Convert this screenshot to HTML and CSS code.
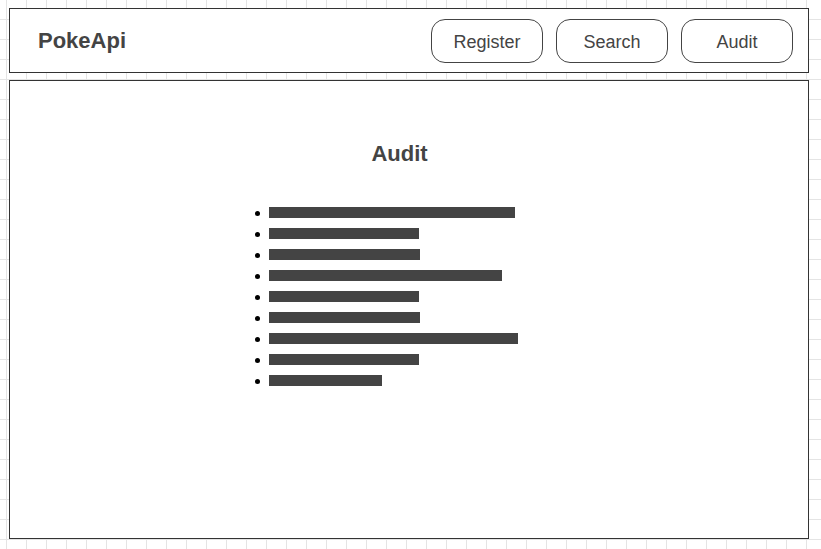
FILE: index.html
```html
<!DOCTYPE html>
<html lang="en">
<head>
<meta charset="utf-8">
<title>PokeApi - Audit</title>
<link rel="stylesheet" href="styles.css">
</head>
<body>
<div class="page">
  <header class="topbar">
    <div class="brand">PokeApi</div>
    <nav class="nav">
      <button class="nav-btn">Register</button>
      <button class="nav-btn">Search</button>
      <button class="nav-btn">Audit</button>
    </nav>
  </header>
  <main class="content">
    <h1 class="title">Audit</h1>
    <ul class="audit-list">
      <li class="audit-item"><span class="bar" style="width:246px"></span></li>
      <li class="audit-item"><span class="bar" style="width:150px"></span></li>
      <li class="audit-item"><span class="bar" style="width:151px"></span></li>
      <li class="audit-item"><span class="bar" style="width:233px"></span></li>
      <li class="audit-item"><span class="bar" style="width:150px"></span></li>
      <li class="audit-item"><span class="bar" style="width:151px"></span></li>
      <li class="audit-item"><span class="bar" style="width:249px"></span></li>
      <li class="audit-item"><span class="bar" style="width:150px"></span></li>
      <li class="audit-item"><span class="bar" style="width:113px"></span></li>
    </ul>
  </main>
</div>
</body>
</html>
```

FILE: styles.css
```css
html, body {
  margin: 0;
  padding: 0;
}

body {
  font-family: "Liberation Sans", Arial, sans-serif;
  color: #444;
  background-color: #fff;
  background-image:
    linear-gradient(to right, #e4e4e4 1px, transparent 1px),
    linear-gradient(to bottom, #e4e4e4 1px, transparent 1px);
  background-size: 20px 20px;
  background-position: 6px 19px;
  min-height: 549px;
}

.page {
  padding: 8px 0 0 9px;
  display: flex;
  flex-direction: column;
  gap: 7px;
}

.topbar {
  box-sizing: border-box;
  width: 800px;
  height: 65px;
  border: 1px solid #333;
  background: #fff;
  display: flex;
  align-items: flex-start;
  justify-content: space-between;
  padding: 10px 15px 0 28px;
}

.brand {
  font-size: 22px;
  line-height: 25px;
  font-weight: bold;
  color: #444;
  margin-top: 9px;
}

.nav {
  display: flex;
  gap: 13px;
}

.nav-btn {
  box-sizing: border-box;
  width: 112px;
  height: 44px;
  border: 1px solid #444;
  border-radius: 14px;
  background: #fff;
  font-family: "Liberation Sans", Arial, sans-serif;
  font-size: 18px;
  color: #444;
  padding: 2px 0 0;
  margin: 0;
}

.content {
  box-sizing: border-box;
  width: 800px;
  height: 459px;
  border: 1px solid #333;
  background: #fff;
  padding: 60px 19px 0 0;
}

.title {
  margin: 0;
  font-size: 22px;
  line-height: 25px;
  font-weight: bold;
  text-align: center;
  color: #444;
}

.audit-list {
  list-style: none;
  margin: 41px 0 0 245px;
  padding: 0;
}

.audit-item {
  display: flex;
  align-items: flex-start;
  height: 21px;
}

.audit-item::before {
  content: "";
  width: 5px;
  height: 5px;
  border-radius: 50%;
  background: #000;
  margin-top: 4px;
  margin-right: 9px;
}

.bar {
  display: block;
  height: 11px;
  background: #444;
}
```
